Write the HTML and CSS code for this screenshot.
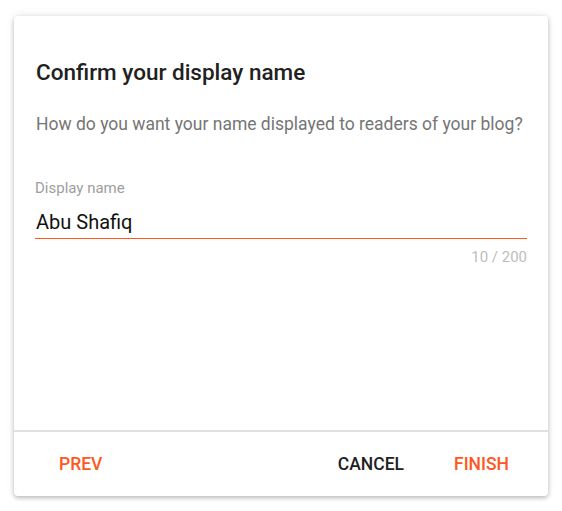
FILE: index.html
```html
<!DOCTYPE html>
<html>
<head>
<meta charset="utf-8">
<link rel="stylesheet" href="styles.css">
</head>
<body>
<div class="dialog">
  <div class="dialog-body">
    <h2 class="title">Confirm your display name</h2>
    <p class="subtitle">How do you want your name displayed to readers of your blog?</p>
    <div class="field">
      <label class="field-label">Display name</label>
      <div class="field-input">Abu Shafiq</div>
      <div class="field-counter">10 / 200</div>
    </div>
  </div>
  <div class="dialog-footer">
    <button class="btn btn-accent">PREV</button>
    <div class="spacer"></div>
    <button class="btn btn-plain">CANCEL</button>
    <button class="btn btn-accent">FINISH</button>
  </div>
</div>
</body>
</html>
```

FILE: styles.css
```css
html, body {
  margin: 0;
  padding: 0;
  background: #ffffff;
}
body {
  font-family: Roboto, "Liberation Sans", sans-serif;
  padding: 16px 14px 15px 14px;
}
.dialog {
  width: 534px;
  height: 480px;
  box-sizing: border-box;
  background: #fff;
  border-radius: 4px;
  box-shadow: 0 2px 4px rgba(0,0,0,0.22), 0 0 8px rgba(0,0,0,0.10);
  display: flex;
  flex-direction: column;
}
.dialog-body {
  flex: 1;
  padding: 43px 21px 0 21px;
}
.title {
  margin: 0;
  font-size: 22.5px;
  line-height: 26px;
  font-weight: 500;
  color: #212121;
  padding-left: 1px;
}
.subtitle {
  margin: 29px 0 0 0;
  font-size: 17.5px;
  line-height: 20px;
  color: #757575;
  padding-left: 1px;
  white-space: nowrap;
}
.field {
  margin-top: 45px;
}
.field-label {
  display: block;
  font-size: 15px;
  line-height: 18px;
  color: #9e9e9e;
}
.field-input {
  margin-top: 13px;
  font-size: 20px;
  line-height: 24px;
  color: #111;
  padding: 0 0 4px 1px;
  border-bottom: 1px solid #ff5722;
}
.field-counter {
  text-align: right;
  font-size: 15px;
  line-height: 20px;
  margin-top: 8px;
  color: #bdbdbd;
}
.dialog-footer {
  border-top: 2px solid #e0e0e0;
  height: 66px;
  box-sizing: border-box;
  display: flex;
  align-items: center;
  padding: 0 30px 0 36px;
}
.spacer {
  flex: 1;
}
.btn {
  background: none;
  border: none;
  font-family: Roboto, "Liberation Sans", sans-serif;
  font-size: 17.5px;
  font-weight: 500;
  padding: 8px 9px;
  margin: 0;
  cursor: pointer;
}
.btn-accent {
  color: #ff5722;
}
.btn-plain {
  color: #212121;
  margin-right: 32px;
}
```
